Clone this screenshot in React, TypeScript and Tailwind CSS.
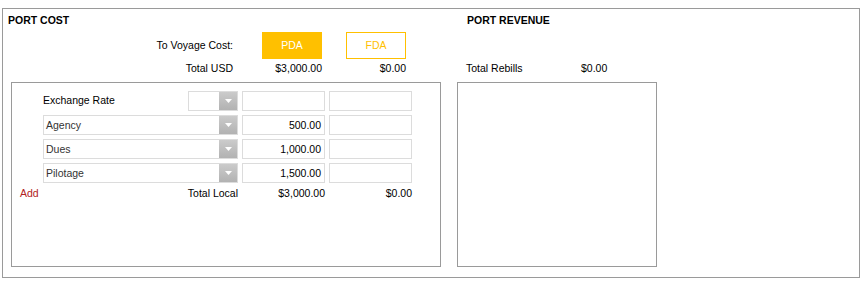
function Select({ label, w }: { label?: string; w: string }) {
  return (
    <div className={`flex h-[20px] border border-[#dcdcdc] bg-white ${w}`}>
      <span className="flex-1 pl-[2px] leading-[18px] text-[#333]">{label}</span>
      <span className="flex w-[18px] items-center justify-center bg-linear-to-b from-[#cbcbcb] to-[#b2b2b2]">
        <svg width="7" height="4" viewBox="0 0 7 4">
          <path d="M0 0h7L3.5 4z" fill="#fff" />
        </svg>
      </span>
    </div>
  );
}

function Input({ value }: { value?: string }) {
  return (
    <div className="ml-[4px] h-[20px] w-[83px] border border-[#dcdcdc] bg-white pr-[3px] text-right leading-[18px] text-black">
      {value}
    </div>
  );
}

const rows = [
  { name: 'Agency', amount: '500.00' },
  { name: 'Dues', amount: '1,000.00' },
  { name: 'Pilotage', amount: '1,500.00' },
];

export default function App() {
  return (
    <div className="h-[286px] w-[864px] bg-white pl-[2px] pt-[8px] font-['Liberation_Sans',Arial,sans-serif] text-[10.5px] text-black">
      <div className="flex h-[270px] w-[858px] border border-[#9a9a9a]">
        {/* Port cost */}
        <div className="w-[454px]">
          <div className="h-[22px] pl-[5px] font-bold leading-[22px]">PORT COST</div>
          <div className="mt-[1px] flex h-[27px] items-center">
            <div className="w-[230px] text-right">To Voyage Cost:</div>
            <button className="ml-[29px] h-[27px] w-[60px] bg-[#ffc000] text-white">PDA</button>
            <button className="ml-[24px] h-[27px] w-[60px] border border-[#ffc000] bg-white text-[#ffc000]">FDA</button>
          </div>
          <div className="flex h-[20px] items-center">
            <div className="w-[230px] text-right">Total USD</div>
            <div className="ml-[29px] w-[60px] text-right">$3,000.00</div>
            <div className="ml-[24px] w-[60px] text-right">$0.00</div>
          </div>
          <div className="ml-[8px] mt-[3px] h-[185px] w-[430px] border border-[#9a9a9a] pt-[8px]">
            <div className="flex flex-col gap-[4px] pl-[31px]">
              <div className="flex items-center">
                <div className="w-[145px]">Exchange Rate</div>
                <Select w="w-[50px]" />
                <Input />
                <Input />
              </div>
              {rows.map((r) => (
                <div key={r.name} className="flex items-center">
                  <Select label={r.name} w="w-[195px]" />
                  <Input value={r.amount} />
                  <Input />
                </div>
              ))}
            </div>
            <div className="flex h-[21px] items-center">
              <div className="w-[31px] pl-[8px] text-[#b22222]">Add</div>
              <div className="w-[195px] text-right">Total Local</div>
              <div className="w-[87px] text-right">$3,000.00</div>
              <div className="w-[87px] text-right">$0.00</div>
            </div>
          </div>
        </div>

        {/* Port revenue */}
        <div className="flex-1">
          <div className="h-[22px] pl-[10px] font-bold leading-[22px]">PORT REVENUE</div>
          <div className="mt-[1px] h-[27px]" />
          <div className="flex h-[20px] items-center pl-[9px]">
            <div className="w-[115px]">Total Rebills</div>
            <div>$0.00</div>
          </div>
          <div className="mt-[3px] h-[185px] w-[200px] border border-[#9a9a9a]" />
        </div>
      </div>
    </div>
  );
}
